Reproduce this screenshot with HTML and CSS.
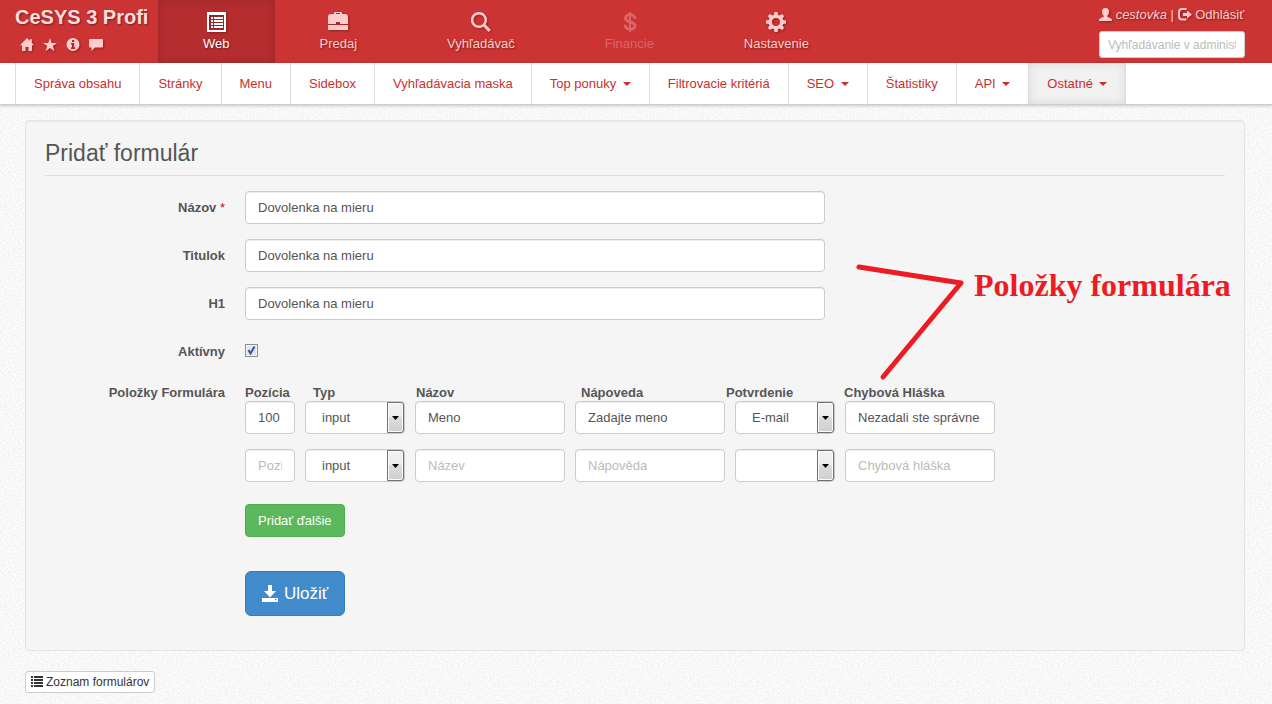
FILE: index.html
```html
<!DOCTYPE html>
<html lang="sk">
<head>
<meta charset="UTF-8">
<meta name="viewport" content="width=device-width, initial-scale=1">
<title>CeSYS 3 Profi</title>
<link rel="stylesheet" href="styles.css">
</head>
<body>

<header class="top">
  <div class="brand">
    <a class="brand-name" href="#">CeSYS 3 Profi</a>
    <div class="brand-icons">
      <a href="#" aria-label="Domov"><svg class="icon" width="14" height="14" viewBox="0 0 14 14"><path d="M7 0l2.800 2.800V1.300h2v3.500L14 7.300h-2V13H8.500V9h-3v4H2V7.300H0z"/></svg></a>
      <a href="#" aria-label="Obľúbené"><svg class="icon" width="14" height="14" viewBox="0 0 14 14"><path d="M7 0l1.700 4.900H14L9.800 8l1.600 5L7 10l-4.400 3 1.600-5L0 4.900h5.300z"/></svg></a>
      <a href="#" aria-label="Informácie"><svg class="icon" width="14" height="14" viewBox="0 0 14 14"><path fill-rule="evenodd" d="M7 0a6.500 6.500 0 1 0 0 13A6.500 6.500 0 0 0 7 0zM6 2h2.200v2H6zM5 5h3.200v4.300h1V11H5V9.300h1V6.500H5z"/></svg></a>
      <a href="#" aria-label="Správy"><svg class="icon" width="14" height="14" viewBox="0 0 14 14"><path d="M1 1h12q1 0 1 1v6.500q0 1-1 1H6L2.500 13V9.500H1q-1 0-1-1V2q0-1 1-1z"/></svg></a>
    </div>
  </div>

  <nav class="main-nav">
    <a class="active" href="#">
      <svg class="icon" width="20" height="20" viewBox="0 0 20 20"><path fill-rule="evenodd" d="M1 0h19v20H1zM3 3v15h15V3zM5 5h2v2H5zM8 5h9v2H8zM5 8h2v2H5zM8 8h9v2H8zM5 11h2v2H5zM8 11h9v2H8zM5 14h2v2H5zM8 14h9v2H8z"/></svg>
      <span>Web</span>
    </a>
    <a href="#">
      <svg class="icon" width="22" height="20" viewBox="0 0 22 20"><path fill-rule="evenodd" d="M7 2V1q0-1 1-1h6q1 0 1 1v1h3q3 0 3 3v7h-8v-2H9v2H1V5q0-3 3-3zM9 2h4V1H9zM1 13h20v5H1z"/></svg>
      <span>Predaj</span>
    </a>
    <a href="#">
      <svg class="icon" width="20" height="20" viewBox="0 0 20 20"><path fill-rule="evenodd" d="M8 0a8 8 0 1 0 4.500 14.500L17.600 20l2.200-2.200-5.300-5.200A8 8 0 0 0 8 0zM8 2.400a5.600 5.600 0 1 1 0 11.200A5.600 5.600 0 0 1 8 2.400z"/></svg>
      <span>Vyhľadávač</span>
    </a>
    <a class="disabled" href="#">
      <svg class="icon" width="20" height="20" viewBox="0 0 20 20"><path d="M11 0v20" stroke="currentColor" stroke-width="2"/><path d="M16 7C16 1.500 6.500 1.500 6.500 6c0 5 9.500 3 9.500 7.700 0 4.800-10 4.800-10-.9" fill="none" stroke="currentColor" stroke-width="3"/></svg>
      <span>Financie</span>
    </a>
    <a href="#">
      <svg class="icon" width="20" height="20" viewBox="0 0 20 20"><path fill-rule="evenodd" d="M8.500 0h3l.6 2.900 1.500.6L16 1.900 18.100 4l-1.600 2.400.6 1.500 2.900.6v3l-2.900.6-.6 1.500 1.600 2.400-2.100 2.100-2.400-1.600-1.500.6-.6 2.900h-3l-.6-2.900-1.500-.6L4 18.100 1.900 16l1.600-2.400-.6-1.500L0 11.500v-3l2.900-.6.6-1.500L1.900 4 4 1.900l2.400 1.600 1.500-.6zM10 6a4 4 0 1 0 0 8 4 4 0 0 0 0-8z"/></svg>
      <span>Nastavenie</span>
    </a>
  </nav>

  <div class="user">
    <div class="user-links">
      <a href="#"><svg class="icon" width="13" height="13" viewBox="0 0 13 13"><path d="M6.500 0C9 0 10 1.500 10 3.500c0 2-.7 3.200-1.700 4.300v1L12 10.500q1 .6 1 2.500H0q0-1.900 1-2.500l3.700-1.700v-1C3.700 6.700 3 5.500 3 3.500 3 1.500 4 0 6.500 0z"/></svg> <em>cestovka</em></a>
      |
      <a href="#"><svg class="icon" width="14" height="13" viewBox="0 0 14 13"><path d="M8.500 0v2H4Q2 2 2 4v4.500q0 2 2 2h4.500v2H4q-4 0-4-4V4q0-4 4-4zM9 2.500l5 4-5 4V8H5V5h4z"/></svg> Odhlásiť</a>
    </div>
    <input class="search" type="text" size="10" placeholder="Vyhľadávanie v administrácii" aria-label="Vyhľadávanie v administrácii">
  </div>
</header>

<nav class="sub-nav">
  <a href="#">Správa obsahu</a>
  <a href="#">Stránky</a>
  <a href="#">Menu</a>
  <a href="#">Sidebox</a>
  <a href="#">Vyhľadávacia maska</a>
  <a href="#">Top ponuky <b class="caret"></b></a>
  <a href="#">Filtrovacie kritériá</a>
  <a href="#">SEO <b class="caret"></b></a>
  <a href="#">Štatistiky</a>
  <a href="#">API <b class="caret"></b></a>
  <a class="active" href="#">Ostatné <b class="caret"></b></a>
</nav>

<main class="content">
  <form class="well">
    <h1 class="legend">Pridať formulár</h1>

    <div class="form-group">
      <label for="nazov">Názov <span class="required">*</span></label>
      <input class="form-control wide" type="text" id="nazov" value="Dovolenka na mieru">
    </div>
    <div class="form-group">
      <label for="titulok">Titulok</label>
      <input class="form-control wide" type="text" id="titulok" value="Dovolenka na mieru">
    </div>
    <div class="form-group">
      <label for="h1">H1</label>
      <input class="form-control wide" type="text" id="h1" value="Dovolenka na mieru">
    </div>
    <div class="form-group">
      <label for="aktivny">Aktívny</label>
      <input class="checkbox" type="checkbox" id="aktivny" checked>
    </div>

    <div class="form-group items">
      <div class="group-title">Položky Formulára</div>
      <div>
        <div class="items-head">
          <label for="pozicia1">Pozícia</label>
          <label for="typ1">Typ</label>
          <label for="nazov1">Názov</label>
          <label for="napoveda1">Nápoveda</label>
          <label for="potvrdenie1">Potvrdenie</label>
          <label for="hlaska1">Chybová Hláška</label>
        </div>
        <div class="items-row">
          <input class="form-control" type="text" id="pozicia1" value="100">
          <span class="select"><select class="form-control" id="typ1"><option>input</option><option>textarea</option></select></span>
          <input class="form-control" type="text" id="nazov1" value="Meno">
          <input class="form-control" type="text" id="napoveda1" value="Zadajte meno">
          <span class="select"><select class="form-control" id="potvrdenie1"><option>E-mail</option><option></option></select></span>
          <input class="form-control" type="text" id="hlaska1" value="Nezadali ste správne">
        </div>
        <div class="items-row">
          <input class="form-control" type="text" placeholder="Pozice" aria-label="Pozícia">
          <span class="select"><select class="form-control" aria-label="Typ"><option>input</option><option>textarea</option></select></span>
          <input class="form-control" type="text" placeholder="Název" aria-label="Názov">
          <input class="form-control" type="text" placeholder="Nápověda" aria-label="Nápoveda">
          <span class="select"><select class="form-control" aria-label="Potvrdenie"><option></option><option>E-mail</option></select></span>
          <input class="form-control" type="text" placeholder="Chybová hláška" aria-label="Chybová hláška">
        </div>
        <div class="buttons">
          <button class="btn btn-success" type="button">Pridať ďalšie</button>
          <button class="btn btn-primary" type="submit"><svg class="icon" width="16" height="18" viewBox="0 0 16 18"><path fill-rule="evenodd" d="M6 0h4v6h4l-6 6.500L2 6h4zM0 13h16v4H0zM13 14v1h1.500v-1z"/></svg>Uložiť</button>
        </div>
      </div>
    </div>

    <div class="note">
      <svg class="note-lines" width="108" height="118" viewBox="0 0 108 118"><path d="M3 4L105 20L27 114" fill="none" stroke="#ed1c24" stroke-width="5" stroke-linecap="round" stroke-linejoin="round"/></svg>
      <span class="note-text">Položky formulára</span>
    </div>
  </form>

  <a class="btn btn-small" href="#"><svg class="icon" width="12" height="12" viewBox="0 0 12 12"><path d="M0 0h2v2H0zM3 0h9v2H3zM0 3h2v2H0zM3 3h9v2H3zM0 6h2v2H0zM3 6h9v2H3zM0 9h2v2H0zM3 9h9v2H3z"/></svg>Zoznam formulárov</a>
</main>

</body>
</html>
```
FILE: styles.css
```css
*,
*::after {
  box-sizing: border-box;
}

body {
  margin: 0;
  background-color: #fdfdfd;
  background-image: url("data:image/svg+xml,%3Csvg xmlns='http://www.w3.org/2000/svg' width='200' height='200'%3E%3Cfilter id='n'%3E%3CfeTurbulence type='fractalNoise' baseFrequency='.6' numOctaves='2' stitchTiles='stitch'/%3E%3CfeColorMatrix values='0 0 0 0 0 0 0 0 0 0 0 0 0 0 0 .12 0 0 0 -.04'/%3E%3C/filter%3E%3Crect width='200' height='200' filter='url(%23n)'/%3E%3C/svg%3E");
  color: #555;
  font-family: "Liberation Sans", Arial, sans-serif;
  font-size: 13px;
  line-height: 18px;
}

a {
  color: inherit;
  text-decoration: none;
}

input, select, button {
  font-family: inherit;
}

.icon {
  fill: currentColor;
}

/* Top bar */
.top {
  display: flex;
  height: 63px;
  background: #c33;
  color: #fcc;
  text-shadow: 1px 1px 2px rgba(0, 0, 0, 0.4);
}

.top .icon {
  filter: drop-shadow(1px 1px 1px rgba(0, 0, 0, 0.3));
}

.brand {
  width: 158px;
  padding: 5px 0 0 15px;
}

.brand-name {
  display: block;
  color: #fdd;
  font-size: 20px;
  font-weight: bold;
  line-height: 24px;
  white-space: nowrap;
}

.brand-icons {
  display: flex;
  gap: 9px;
  padding: 9px 5px;
}

.brand-icons .icon {
  display: block;
}

.main-nav {
  display: flex;
}

.main-nav a {
  display: flex;
  flex-direction: column;
  align-items: center;
  gap: 3px;
  padding: 12px 45px 0;
}

.main-nav .active {
  background: #b52d2f;
  box-shadow: inset 0 0 10px rgba(0, 0, 0, 0.15);
  color: #fff;
}

.main-nav .disabled {
  color: #db6666;
  text-shadow: none;
}

.main-nav .disabled .icon {
  filter: none;
}

.user {
  width: 146px;
  margin: 6px 27px 0 auto;
}

.user-links {
  white-space: nowrap;
}

.user-links .icon {
  vertical-align: -2px;
}

.search {
  display: block;
  width: 100%;
  height: 27px;
  margin-top: 7px;
  padding: 0 8px;
  border: 1px solid #ccc;
  border-radius: 3px;
  background: #fff;
  font-size: 12px;
}

::placeholder {
  color: #bbb;
  opacity: 1;
}

/* Second level menu */
.sub-nav {
  display: flex;
  height: 42px;
  padding-left: 15px;
  border-bottom: 1px solid #ccc;
  background: #fff;
  box-shadow: 0 1px 3px rgba(0, 0, 0, 0.2);
  color: #c9302c;
}

.sub-nav a {
  padding: 12px 18px 0;
  border-left: 1px solid #ddd;
  white-space: nowrap;
}

.sub-nav .active {
  border-right: 1px solid #ddd;
  background: #f1f1f1;
  box-shadow: inset 0 0 10px rgba(0, 0, 0, 0.1);
}

.caret {
  display: inline-block;
  margin-left: 3px;
  border-top: 4px solid;
  border-right: 4px solid transparent;
  border-left: 4px solid transparent;
  vertical-align: 2px;
}

/* Form */
.content {
  padding: 15px 27px 10px 25px;
}

.well {
  position: relative;
  margin-bottom: 20px;
  padding: 19px;
  border: 1px solid #e3e3e3;
  border-radius: 4px;
  background: #f5f5f5;
  box-shadow: inset 0 1px 1px rgba(0, 0, 0, 0.05);
}

.legend {
  margin: 0 0 15px;
  padding-bottom: 9px;
  border-bottom: 1px solid #ddd;
  font-size: 23px;
  font-weight: normal;
  line-height: 26px;
}

.form-group {
  display: grid;
  grid-template-columns: 180px 1fr;
  column-gap: 20px;
  margin-bottom: 15px;
}

.form-group > label,
.group-title {
  padding-top: 8px;
  font-weight: bold;
  text-align: right;
}

.items .group-title,
.items-head {
  padding-top: 1px;
  line-height: 17px;
}

.required {
  color: #d9001b;
  font-weight: normal;
}

.form-control {
  width: 100%;
  height: 33px;
  padding: 0 12px;
  border: 1px solid #ccc;
  border-radius: 4px;
  background: #fff;
  box-shadow: inset 0 1px 1px rgba(0, 0, 0, 0.075);
  color: #555;
  font-size: 13px;
}

.wide {
  max-width: 580px;
}

.checkbox {
  appearance: none;
  width: 13px;
  height: 13px;
  margin: 9px 0 11px;
  border: 1px solid #8e8f8f;
  background: #dfe4ee url("data:image/svg+xml,%3Csvg xmlns='http://www.w3.org/2000/svg' viewBox='0 0 11 11'%3E%3Cpath d='M2.500 5l2 3.500 4-7' fill='none' stroke='%23405499' stroke-width='2'/%3E%3C/svg%3E");
  box-shadow: inset 0 0 0 1px #f4f4f4;
}

.checkbox:not(:checked) {
  background-image: none;
}

.items-head {
  display: grid;
  grid-template-columns: 68px 103px 165px 145px 118px auto;
  font-weight: bold;
}

.items-row {
  display: grid;
  grid-template-columns: 50px 100px 150px 150px 100px 150px;
  gap: 10px;
  margin-bottom: 15px;
}

.select {
  position: relative;
}

.select select {
  appearance: none;
  padding: 0 20px 0 16px;
}

/* arrow button of the drop-down */
.select::after {
  content: "";
  position: absolute;
  top: 1px;
  right: 1px;
  width: 17px;
  height: 31px;
  border: 1px solid #707070;
  border-radius: 0 3px 3px 0;
  background:
    url("data:image/svg+xml,%3Csvg xmlns='http://www.w3.org/2000/svg' width='7' height='4'%3E%3Cpath d='M0 0h7L3.500 4z'/%3E%3C/svg%3E") center no-repeat,
    linear-gradient(#f2f2f2, #ebebeb 50%, #ddd 50%, #cfcfcf);
  box-shadow: inset 0 0 0 1px #fcfcfc;
  pointer-events: none;
}

.buttons {
  display: flex;
  flex-direction: column;
  align-items: flex-start;
  gap: 34px;
  padding-top: 7px;
}

.btn {
  display: inline-flex;
  align-items: center;
  justify-content: center;
  border: 1px solid #ccc;
  border-radius: 4px;
  cursor: pointer;
  white-space: nowrap;
}

.btn-success {
  height: 33px;
  padding: 0 12px;
  border-color: #4cae4c;
  background: #5cb85c;
  color: #fff;
  font-size: 13px;
}

.btn-primary {
  gap: 6px;
  height: 45px;
  padding: 0 16px;
  border-color: #357ebd;
  border-radius: 6px;
  background: #428bca;
  color: #fff;
  font-size: 17px;
}

.btn-small {
  gap: 3px;
  height: 22px;
  padding: 0 5px;
  border-radius: 3px;
  background: #fff;
  color: #333;
  font-size: 12px;
}

/* Hand-drawn note over the form */
.note {
  position: absolute;
  top: 142px;
  left: 830px;
  display: flex;
  gap: 10px;
}

.note-text {
  color: #ed1c24;
  font-family: "Liberation Serif", "Times New Roman", serif;
  font-size: 32px;
  font-weight: bold;
  line-height: 44px;
  white-space: nowrap;
}
```
